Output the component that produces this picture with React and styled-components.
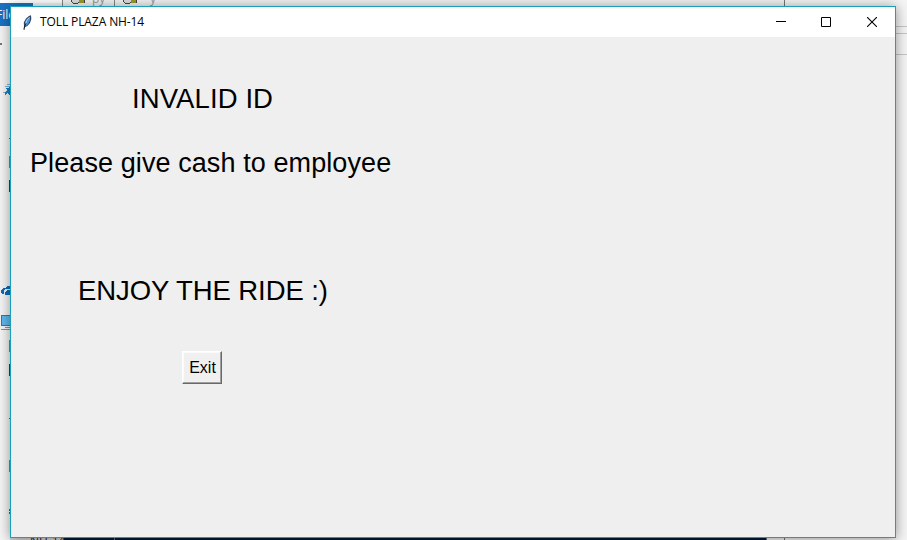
import React from "react";
import styled, { createGlobalStyle } from "styled-components";

const GlobalStyle = createGlobalStyle`
  * { box-sizing: border-box; }
  html, body { margin: 0; overflow: hidden; }
`;

const Desktop = styled.div`
  position: relative;
  width: 907px;
  height: 540px;
  overflow: hidden;
  background: #f5f5f5;
  font-family: "Liberation Sans", Arial, sans-serif;
`;

const Backdrop = styled.svg`
  position: absolute;
  inset: 0;
`;

const BehindText = styled.span`
  position: absolute;
  left: ${(p) => p.$x}px;
  top: ${(p) => p.$y}px;
  color: ${(p) => p.$color};
  font: 12px/14px "Open Sans", sans-serif;
  white-space: nowrap;
`;

const Window = styled.main`
  position: absolute;
  left: 10px;
  top: 6px;
  width: 886px;
  height: 532px;
  display: flex;
  flex-direction: column;
  border: 1px solid #189fbb;
  background: #efefef;
  box-shadow: 0 1px 12px rgba(0, 0, 0, 0.42);
`;

const TitleBar = styled.header`
  display: flex;
  align-items: center;
  height: 30px;
  flex: none;
  padding-left: 10px;
  background: #fff;
`;

const Title = styled.h1`
  margin: 0 auto 0 6px;
  font: 400 12px/16px "Open Sans", sans-serif;
  letter-spacing: -0.1px;
  color: #000;
  white-space: nowrap;
`;

const Control = styled.button`
  display: grid;
  place-items: center;
  width: ${(p) => p.$width}px;
  height: 30px;
  padding: 0;
  border: 0;
  background: none;
`;

const Content = styled.section`
  display: flex;
  flex-direction: column;
  align-items: flex-start;
  padding: 46px 0 0 19px;
`;

const Message = styled.p`
  margin: 0 0 ${(p) => p.$gap}px ${(p) => p.$indent}px;
  font-size: ${(p) => p.$size}px;
  line-height: 32px;
  letter-spacing: ${(p) => p.$spacing}px;
  color: #000;
  white-space: nowrap;
`;

const ExitButton = styled.button`
  width: 40px;
  height: 33px;
  margin-left: 152px;
  padding: 0 0 0 1px;
  border: 1px solid;
  border-color: #fff #696969 #696969 #fff;
  box-shadow: inset -1px -1px 0 #a0a0a0, inset 1px 1px 0 #fbfbfb;
  background: #f0f0f0;
  font: 16px/20px "Liberation Sans", Arial, sans-serif;
  color: #000;
`;

const Feather = () => (
  <svg width="13" height="17" viewBox="0 0 13 17">
    <path d="M2.5 15.5 3 12 2.8 8.5 5 4.5 8 2 10 1.2 10.3 5 9 9 6.3 12 4 13Z" fill="#26384f" />
    <path d="M3.8 11.5 3.9 8 5.7 4.8 9.2 2.2 9.2 6 7.5 9.8 5 12Z" fill="#4b91dc" />
    <path d="M5 9 6.2 6 8.5 3.5" fill="none" stroke="#a5cff5" />
    <path d="M3 16 4 11.5 5 9.5" fill="none" stroke="#141414" strokeWidth=".8" />
  </svg>
);

const Behind = () => (
  <Backdrop width="907" height="540" viewBox="0 0 907 540" shapeRendering="crispEdges">
    <rect width="62" height="3" fill="#fff" />
    <rect y="3" width="33" height="23" fill="#1a73c4" />
    <rect x="62" width="723" height="7" fill="#f3f3f3" />
    <path d="M62.5 0v7M114.5 0v7" stroke="#858585" />
    <path d="M784.5 0v7M784.5 537v3" stroke="#777" />
    <path d="M895 26.5h12M895 33.5h12M895 54.5h12" stroke="#c6c6c6" />
    <rect y="43" width="2" height="2" fill="#777" />
    {[71, 123].map((x) => (
      <g key={x}>
        <path d={`M${x} 0v1l2 2h5l1-1h5V0`} fill="#ddd" stroke="#454545" />
        <rect x={x + 8} width="5" height="3" fill="#9c9d24" />
      </g>
    ))}
    <path d="M7 84h3M5 86h5M3 92h4" stroke="#7ab8dd" />
    <path d="M5 88h3l2-2v9l-3-2-2 2v-3l2-2z" fill="#1683c6" />
    <path d="M9.5 138v1M9.5 418v1M9.5 509v2M9.5 512v2" stroke="#167fa7" />
    <path d="M9.5 156v12M9.5 340v12M9.5 460v12" stroke="#718e91" />
    <path d="M9.5 180v12M9.5 364v12" stroke="#0b4d70" />
    <path d="M1 293v-3l2-2h2l2-2h3v9H5v-2l2-3-3 2v2H2z" fill="#0b6cc0" />
    <path d="M4.5 293v-2l2-2h3" fill="none" stroke="#e5f0f8" />
    <rect x="1.5" y="315.5" width="10" height="10" fill="#5eb8ed" stroke="#347ba5" />
    <path d="M5 327.5h5M1 329.5h9" stroke="#8493a0" />
    <rect x="10" y="537" width="54" height="3" fill="#d8d8d8" />
    <rect x="64" y="537" width="703" height="3" fill="#001b38" />
    <path d="M114.5 537v3M766.5 537v3" stroke="#64717d" />
  </Backdrop>
);

export default function App() {
  return (
    <Desktop>
      <GlobalStyle />
      <Behind />
      <BehindText $x={-4} $y={8} $color="#fff">File</BehindText>
      <BehindText $x={92} $y={-8} $color="#999">py</BehindText>
      <BehindText $x={150} $y={-8} $color="#999">y</BehindText>
      <BehindText $x={30} $y={534} $color="#25152d">NH-14</BehindText>
      <Window>
        <TitleBar>
          <Feather />
          <Title>TOLL PLAZA NH-14</Title>
          <Control $width={44} aria-label="Minimize">
            <svg width="10" height="10"><path d="M0 4.5h10" stroke="#000" /></svg>
          </Control>
          <Control $width={46} aria-label="Maximize">
            <svg width="10" height="10"><path d="M.5.5h9v9h-9z" fill="none" stroke="#000" /></svg>
          </Control>
          <Control $width={46} aria-label="Close">
            <svg width="10" height="10"><path d="m0 0 10 10M10 0 0 10" stroke="#000" strokeWidth="1.1" /></svg>
          </Control>
        </TitleBar>
        <Content>
          <Message $size={27.5} $indent={102} $gap={32} $spacing={0.1}>INVALID ID</Message>
          <Message $size={27} $indent={0} $gap={96} $spacing={0.09}>Please give cash to employee</Message>
          <Message $size={27.5} $indent={48} $gap={44} $spacing={-0.07}>ENJOY THE RIDE :)</Message>
          <ExitButton>Exit</ExitButton>
        </Content>
      </Window>
    </Desktop>
  );
}
